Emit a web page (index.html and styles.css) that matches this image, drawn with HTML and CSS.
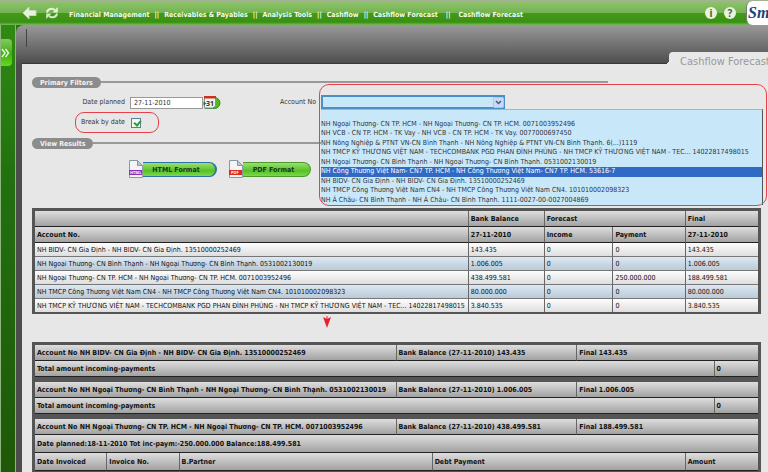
FILE: index.html
```html
<!DOCTYPE html>
<html lang="en">
<head>
<meta charset="utf-8">
<title>Cashflow Forecast</title>
<link rel="stylesheet" href="styles.css">
</head>
<body>
<header class="topbar">
  <button class="icon-btn" aria-label="Back"><svg width="15" height="14" viewBox="0 0 15 14"><path d="M1 7 7 1v3.500h7v5H7V13z" fill="#e6f2dc" stroke="#c4dcb4"/></svg></button>
  <button class="icon-btn refresh" aria-label="Refresh"><svg width="14" height="14" viewBox="0 0 14 14"><path d="M2 6.500C2.500 3 7 1.500 10 4" fill="none" stroke="#e6f2dc" stroke-width="2"/><path d="M12.800 1v5.500H7.500z" fill="#e6f2dc"/><path d="M12 7.500C11.500 11 7 12.500 4 10" fill="none" stroke="#d4e8c8" stroke-width="2"/><path d="M1.200 13V7.500h5.300z" fill="#d4e8c8"/></svg></button>
  <nav class="crumbs" aria-label="Path">
    <a href="#">Financial Management</a><span>||</span><a href="#">Receivables &amp; Payables</a><span>||</span><a href="#">Analysis Tools</a><span>||</span><a href="#">Cashflow</a><span>||</span><a href="#">Cashflow Forecast</a><span class="wide">||</span><a href="#">Cashflow Forecast</a>
  </nav>
  <div class="tools">
    <button class="round" aria-label="Info">i</button>
    <button class="round" aria-label="Help">?</button>
  </div>
  <div class="logo">Sm</div>
</header>
<div class="shell">
  <aside class="rail">
    <button class="expand" aria-label="Expand menu"><svg width="9" height="10" viewBox="0 0 9 10"><path d="M1 1l3 4-3 4M4.500 1l3 4-3 4" fill="none" stroke="#e4f8d4" stroke-width="1.500"/></svg></button>
  </aside>
  <main class="work">
    <div class="band">
      <div class="tick"></div>
      <h1 class="tab">Cashflow Forecast</h1>
    </div>
    <div class="panel">
      <h2 class="section"><span>Primary Filters</span></h2>
      <form class="filters">
        <div class="left">
          <div class="field"><label for="date">Date planned</label><input class="date" id="date" type="text" value="27-11-2010"><button type="button" class="cal" aria-label="Choose date"><svg width="18" height="14" viewBox="0 0 18 14"><path d="M2 1.500h9.500a5.500 5.500 0 0 1 0 11H2z" fill="#58b822" stroke="#3d8c14"/><path d="M1.500 1h11v8.500l-2.500 2.500H1.500z" fill="#eef3fa" stroke="#7f92a8"/><path d="M1 0h12v2.500H1z" fill="#c8331c"/><text x="3" y="9.500" class="cal-num">31</text><path d="M3.500 7.500l-3-2v4z" fill="#2d6e10"/></svg></button></div>
          <div class="field ring-small"><label for="brk">Break by date</label><input class="check" id="brk" type="checkbox" checked></div>
        </div>
        <label class="acc-label" for="acc">Account No</label>
        <div class="account">
          <select id="acc"><option></option></select>
          <svg class="chev" width="11" height="11" viewBox="0 0 11 11"><rect x=".5" y=".5" width="10" height="10" rx="1" fill="#c9d8fb" stroke="#b0c4f4"/><path d="M3 4l2.500 2.500L8 4" fill="none" stroke="#46597c" stroke-width="1.500"/></svg>
          <ul class="menu" role="listbox" aria-label="Account No">
            <li></li>
            <li>NH Ngoại Thương- CN TP. HCM - NH Ngoại Thương- CN TP. HCM. 0071003952496</li>
            <li>NH VCB - CN TP. HCM - TK Vay - NH VCB - CN TP. HCM - TK Vay. 0077000697450</li>
            <li>NH Nông Nghiệp &amp; PTNT VN-CN Bình Thạnh - NH Nông Nghiệp &amp; PTNT VN-CN Bình Thạnh. 6(...)1119</li>
            <li>NH TMCP KỸ THƯƠNG VIỆT NAM - TECHCOMBANK PGD PHAN ĐÌNH PHÙNG - NH TMCP KỸ THƯƠNG VIỆT NAM - TEC... 14022817498015</li>
            <li>NH Ngoại Thương- CN Bình Thạnh - NH Ngoại Thương- CN Bình Thạnh. 0531002130019</li>
            <li class="on">NH Công Thương Việt Nam- CN7 TP. HCM - NH Công Thương Việt Nam- CN7 TP. HCM. 53616-7</li>
            <li>NH BIDV- CN Gia Định - NH BIDV- CN Gia Định. 13510000252469</li>
            <li>NH TMCP Công Thương Việt Nam CN4 - NH TMCP Công Thương Việt Nam CN4. 101010002098323</li>
            <li>NH Á Châu- CN Bình Thạnh - NH Á Châu- CN Bình Thạnh. 1111-0027-00-0027004869</li>
          </ul>
          <div class="ring-big"></div>
        </div>
      </form>
      <h2 class="section second"><span>View Results</span></h2>
      <div class="actions">
        <button class="fmt html"><svg width="14" height="18" viewBox="0 0 14 18"><path d="M.5.500h8l5 5v12H.5z" fill="#f2f4f6" stroke="#8a98a4"/><path d="M8.500.500l5 5h-5z" fill="#b8c8d4" stroke="#8a98a4"/><path d="M0 10h13v5H0z" fill="#8a2fc0"/><text x="1" y="14" class="tag">HTML</text></svg><span>HTML Format</span></button>
        <button class="fmt pdf"><svg width="14" height="18" viewBox="0 0 14 18"><path d="M.5.500h8l5 5v12H.5z" fill="#f2f4f6" stroke="#8a98a4"/><path d="M8.500.500l5 5h-5z" fill="#b8c8d4" stroke="#8a98a4"/><path d="M0 10h13v5H0z" fill="#dc2a1c"/><text x="2" y="14" class="tag">PDF</text></svg><span>PDF Format</span></button>
      </div>

      <div class="frame">
        <table class="grid summary">
          <colgroup><col class="c60"><col class="c105"><col class="c95"><col class="c10"><col class="c10"></colgroup>
          <thead>
            <tr><th></th><th>Bank Balance</th><th colspan="2">Forecast</th><th>Final</th></tr>
            <tr><th>Account No.</th><th>27-11-2010</th><th>Income</th><th>Payment</th><th>27-11-2010</th></tr>
          </thead>
          <tbody>
            <tr><td>NH BIDV- CN Gia Định - NH BIDV- CN Gia Định. 13510000252469</td><td>143.435</td><td>0</td><td>0</td><td>143.435</td></tr>
            <tr><td>NH Ngoại Thương- CN Bình Thạnh - NH Ngoại Thương- CN Bình Thạnh. 0531002130019</td><td>1.006.005</td><td>0</td><td>0</td><td>1.006.005</td></tr>
            <tr><td>NH Ngoại Thương- CN TP. HCM - NH Ngoại Thương- CN TP. HCM. 0071003952496</td><td>438.499.581</td><td>0</td><td>250.000.000</td><td>188.499.581</td></tr>
            <tr><td>NH TMCP Công Thương Việt Nam CN4 - NH TMCP Công Thương Việt Nam CN4. 101010002098323</td><td>80.000.000</td><td>0</td><td>0</td><td>80.000.000</td></tr>
            <tr><td>NH TMCP KỸ THƯƠNG VIỆT NAM - TECHCOMBANK PGD PHAN ĐÌNH PHÙNG - NH TMCP KỸ THƯƠNG VIỆT NAM - TEC... 14022817498015</td><td>3.840.535</td><td>0</td><td>0</td><td>3.840.535</td></tr>
          </tbody>
        </table>
      </div>
      <div class="pointer"><svg width="8" height="12" viewBox="0 0 8 12"><path d="M0 1l4 2 4-2-4 11z" fill="#e8202c"/><path d="M4 0v5" stroke="#e8202c"/></svg></div>

      <div class="frame details">
        <section>
          <table class="grid"><colgroup><col class="c50"><col class="c25"><col class="c25"></colgroup><tr><th>Account No NH BIDV- CN Gia Định - NH BIDV- CN Gia Định. 13510000252469</th><th>Bank Balance (27-11-2010) 143.435</th><th>Final 143.435</th></tr></table>
          <table class="grid"><colgroup><col class="c94"><col class="c6"></colgroup><tr><th>Total amount incoming-payments</th><th>0</th></tr></table>
        </section>
        <section>
          <table class="grid"><colgroup><col class="c50"><col class="c25"><col class="c25"></colgroup><tr><th>Account No NH Ngoại Thương- CN Bình Thạnh - NH Ngoại Thương- CN Bình Thạnh. 0531002130019</th><th>Bank Balance (27-11-2010) 1.006.005</th><th>Final 1.006.005</th></tr></table>
          <table class="grid"><colgroup><col class="c94"><col class="c6"></colgroup><tr><th>Total amount incoming-payments</th><th>0</th></tr></table>
        </section>
        <section>
          <table class="grid"><colgroup><col class="c50"><col class="c25"><col class="c25"></colgroup><tr><th>Account No NH Ngoại Thương- CN TP. HCM - NH Ngoại Thương- CN TP. HCM. 0071003952496</th><th>Bank Balance (27-11-2010) 438.499.581</th><th>Final 188.499.581</th></tr></table>
          <table class="grid tall"><colgroup><col class="c10"><col class="c10"><col class="c35"><col class="c35"><col class="c10"></colgroup>
            <tr><th colspan="5">Date planned:18-11-2010 Tot inc-paym:-250.000.000 Balance:188.499.581</th></tr>
            <tr><th>Date Invoiced</th><th>Invoice No.</th><th>B.Partner</th><th>Debt Payment</th><th>Amount</th></tr>
          </table>
        </section>
      </div>
    </div>
  </main>
</div>
</body>
</html>
```
FILE: styles.css
```css
* { box-sizing: border-box; }
html, body { height: 100%; }
body {
  --bold: bold 7px/10px "DejaVu Sans Condensed", "DejaVu Sans", sans-serif;
  margin: 0;
  display: flex;
  flex-direction: column;
  overflow: hidden;
  background: #1f5a0a;
  color: #333;
  font: 7px/9px "DejaVu Sans Condensed", "DejaVu Sans", sans-serif;
}
button { font: inherit; padding: 0; border: 0; background: none; }
svg { display: block; }
h1, h2, ul { margin: 0; padding: 0; }

.topbar {
  flex: none;
  display: flex;
  align-items: center;
  height: 25px;
  padding-left: 22px;
  border-top: 1px solid #a5b094;
  background: linear-gradient(#8fc46e, #74b450 48%, #439a1a 52%, #3a9012 88%, #79ba5c);
}
.refresh { margin-left: 8px; }
.crumbs {
  display: flex;
  gap: 5px;
  margin: 3px 0 0 10px;
  color: #f4fbee;
  font: var(--bold);
  white-space: nowrap;
}
.crumbs a { color: inherit; text-decoration: none; }
.crumbs .wide { margin: 0 3px; }
.tools { display: flex; gap: 7px; margin-left: auto; }
.round {
  width: 12px;
  height: 12px;
  border-radius: 50%;
  background: #e8f2e0;
  color: #3a6a20;
  font: bold 10px/12px "Noto Sans", sans-serif;
}
.logo {
  align-self: stretch;
  width: 22px;
  margin-left: 10px;
  padding-left: 1px;
  overflow: hidden;
  border-left: 1px solid #777;
  border-radius: 6px 0 0 6px;
  background: #fff;
  color: #1c4478;
  font: italic bold 16px/24px "Liberation Serif", serif;
}

.shell { flex: 1; display: flex; min-height: 0; background: #2a7410; }
.rail {
  flex: none;
  width: 16px;
  border: solid #8fb67e;
  border-width: 0 1px;
  background: linear-gradient(#2f8a12, #227010 35%, #1f5808);
}
.expand {
  display: flex;
  align-items: center;
  width: 11px;
  height: 27px;
  margin-top: 14px;
  border-radius: 0 4px 4px 0;
  background: linear-gradient(#86c860, #3fae14 55%, #62dc1c);
}
.work {
  flex: 1;
  min-width: 0;
  display: flex;
  flex-direction: column;
  padding-left: 6px;
  border-radius: 8px 0 0 0;
  background: linear-gradient(#999, #4c4c4c 39px);
}
.band { flex: none; display: flex; justify-content: space-between; height: 39px; box-shadow: inset 0 -1px #383838; }
.tick { width: 1px; height: 18px; margin: 4px 0 0 4px; background: #444; }
.tab {
  position: relative;
  z-index: 1;
  align-self: flex-end;
  height: 12px;
  width: 99px;
  padding-left: 11px;
  border-radius: 4px 0 0 0;
  background: #e8e8e8;
  color: #999;
  font: 11px/19px "DejaVu Sans Condensed", "DejaVu Sans", sans-serif;
  white-space: nowrap;
}
.tab::before {
  content: "";
  position: absolute;
  right: 100%;
  bottom: 0;
  width: 4px;
  height: 4px;
  background: radial-gradient(circle at 0 0, transparent 4px, #e8e8e8 4px);
}
.panel { flex: 1; min-height: 0; padding: 12px 7px 0 10px; background: #e7e7e7; }

.section { display: flex; align-items: center; width: 79%; height: 12px; font: var(--bold); }
.section::after { content: ""; flex: 1; height: 2px; background: #999; }
.section span { padding: 1px 8px 0; border-radius: 6px; background: #8c8c8c; color: #f4f4f4; }

.filters { display: flex; align-items: flex-start; height: 49px; padding-top: 7px; margin-right: -2px; }
.left { flex: none; width: 225px; padding-top: 1px; }
.field { display: flex; align-items: center; height: 13px; }
.field label { width: 93px; text-align: right; }
.date {
  width: 73px;
  height: 12px;
  margin-left: 5px;
  padding: 0 3px;
  border: 1px solid #999;
  background: #fff;
  color: #333;
  font: inherit;
}
.cal-num { font: bold 7px "Noto Sans", sans-serif; fill: #333; }
.ring-small { width: 84px; height: 21px; margin: 3px 0 0 43px; border: 1px solid #e8404a; border-radius: 9px; }
.ring-small label { width: 49px; }
.check {
  appearance: none;
  width: 10px;
  height: 10px;
  margin: 0 0 0 6px;
  border: 1px solid #5a7c9c;
  background: #f4f8f4;
}
.check::after {
  content: "";
  display: block;
  width: 3px;
  height: 5px;
  margin-left: 3px;
  border: solid #2ca02c;
  border-width: 0 2px 2px 0;
  transform: rotate(40deg);
}
.acc-label { width: 59px; padding-top: 3px; text-align: right; }
.account { position: relative; flex: 1; margin-left: 5px; }
.account select {
  display: block;
  width: 184px;
  height: 14px;
  appearance: none;
  border: 2px solid #4a90c4;
  border-radius: 0;
  background: #c8e8fa;
}
.chev { position: absolute; left: 172px; top: 2px; }
.menu {
  position: absolute;
  z-index: 2;
  top: 14px;
  left: 0;
  right: 0;
  height: 96px;
  display: grid;
  grid-auto-rows: 1fr;
  list-style: none;
  border-top: 1px solid #aab4ba;
  border-right: 1px solid #555;
  background: #c8e8fa;
  white-space: nowrap;
}
.menu .on { background: #316ac5; color: #fff; }
.ring-big { position: absolute; z-index: 3; top: -11px; left: -2px; right: -4px; height: 122px; border: 1px solid #e8404a; border-radius: 10px; pointer-events: none; }

.actions { display: flex; gap: 12px; margin: 11px 0 30px 97px; }
.fmt { display: flex; align-items: center; width: 88px; height: 18px; color: #173a2c; font: var(--bold); }
.fmt span { flex: 1; height: 15px; padding: 2px 6px 0 0; border: 1px solid #4c9a2c; border-left: 0; border-radius: 0 8px 8px 0; background: linear-gradient(#9ae070, #58c024 60%, #7cd850); }
.fmt.html span { border-color: #2c74a4; border-width: 1px 2px 1px 0; }
.fmt.pdf { width: 82px; }
.tag { font: bold 4px "Noto Sans", sans-serif; fill: #fff; }

.frame { padding: 3px 3px 2px; background: #555; }
.grid { width: 100%; table-layout: fixed; border-collapse: separate; border-spacing: 0; color: #111; white-space: nowrap; }
.grid th, .grid td { padding: 0 2px; text-align: left; border-right: 1px solid #666; border-bottom: 1px solid #777; }
.grid th:last-child, .grid td:last-child { border-right: 0; }
.grid th { height: 16px; padding-top: 1px; border-bottom-color: #222; background: linear-gradient(#dedede, #a2a2a2); font: var(--bold); }
.grid td { height: 14px; padding-top: 1px; background: linear-gradient(#fdfdfd, #dedede); }
.grid tr:nth-child(even) td { background: linear-gradient(#dde8f2, #b9cad9); }
.summary tr:last-child td { height: 13px; border-bottom: 0; }
.c6 { width: 6%; } .c10 { width: 10%; } .c25 { width: 25%; } .c35 { width: 35%; }
.c50 { width: 50%; } .c60 { width: 60%; } .c94 { width: 94%; } .c95 { width: 9.5%; } .c105 { width: 10.5%; }
.pointer { height: 28px; padding: 2px 0 0 291px; }
.details { display: grid; gap: 5px; }
.grid.tall th { height: 18px; }
```
